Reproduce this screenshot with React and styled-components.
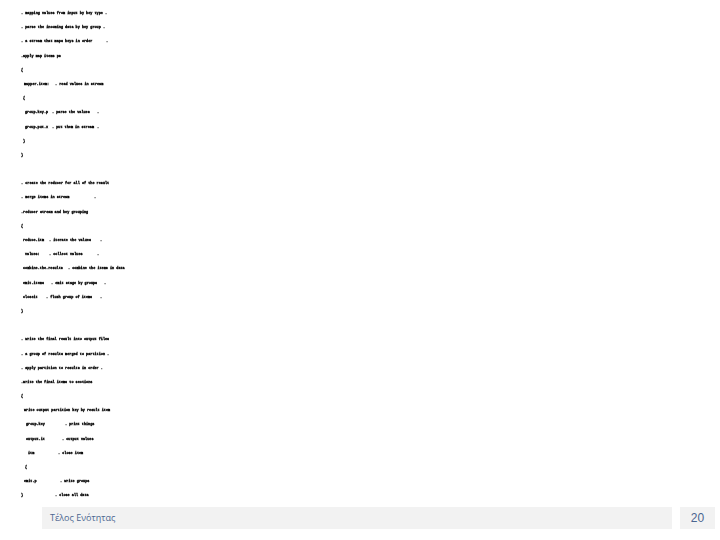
import React from "react";
import styled, { createGlobalStyle } from "styled-components";

const GlobalStyle = createGlobalStyle`
  html, body {
    margin: 0;
    padding: 0;
    background: #fff;
  }
`;

const Slide = styled.div`
  display: flex;
  flex-direction: column;
  width: 720px;
  height: 540px;
  overflow: hidden;
  background: #fff;
`;

const Code = styled.div`
  display: flex;
  flex-direction: column;
  padding: 6px 0 0 21px;
  font-family: "Liberation Mono", "Courier New", monospace;
  font-size: 3.5px;
  font-weight: 700;
  color: #000;
  -webkit-text-stroke: 0.3px #000;
  will-change: transform;
`;

const Line = styled.div`
  display: flex;
  height: 14.2px;
  line-height: 14.2px;
  padding-left: ${(p) => p.$indent || 0}px;
  white-space: nowrap;
`;

const Token = styled.span`
  flex: none;
  min-width: ${(p) => p.$w || 0}px;
`;

const Footer = styled.div`
  display: flex;
  gap: 8px;
  height: 22px;
  margin-top: auto;
  margin-bottom: 11px;
  padding: 0 5px 0 42px;
`;

const FooterBar = styled.div`
  flex: 1;
  padding-left: 8px;
  background: #f2f2f2;
  color: #4a6590;
  font-family: "Open Sans", "Noto Sans", sans-serif;
  font-size: 9px;
  line-height: 22px;
`;

const PageNumber = styled.div`
  width: 35px;
  background: #f2f2f2;
  color: #4a6590;
  font-family: "Liberation Sans", Arial, sans-serif;
  font-size: 12px;
  line-height: 22px;
  text-align: center;
`;

// each row: indent, then [text, width] pairs
const rows = [
  [0, [". mapping values from input by key type ."]],
  [0, [". parse the incoming data by key group ."]],
  [0, [". a stream that maps keys in order", 85], ["."]],
  [-1, [".apply map items ps"]],
  [0, ["{"]],
  [3, ["mapper.item:", 31], [". read values in stream"]],
  [2, ["{"]],
  [4, ["group.key.p", 27], [". parse the values", 45], ["."]],
  [4, ["group.put.x", 27], [". put them in stream", 45], ["."]],
  [2, ["}"]],
  [0, ["}"]],
  [0, [" "]],
  [0, [". create the reducer for all of the result"]],
  [0, [". merge items in stream", 73], ["."]],
  [-1, [".reducer stream and key grouping"]],
  [0, ["{"]],
  [2, ["reduce.itm", 26], [". iterate the values", 51], ["."]],
  [4, ["values:", 24], [". collect values", 48], ["."]],
  [2, ["combine.the.results", 45], [". combine the items in data"]],
  [2, ["emit.items", 28], [". emit stage by groups", 53], ["."]],
  [2, ["closeit", 23], [". flush group of items", 54], ["."]],
  [0, ["}"]],
  [0, [" "]],
  [0, [". write the final result into output files"]],
  [0, [". a group of results merged to partition ."]],
  [0, [". apply partition to results in order  ."]],
  [-1, [".write the final items to sections"]],
  [0, ["{"]],
  [3, ["write output partition key by result item"]],
  [5, ["group.key", 39], [". print things"]],
  [5, ["output.it", 36], [". output values"]],
  [7, ["itm", 30], [". close item"]],
  [4, ["{"]],
  [3, ["emit.p", 36], [". write groups"]],
  [0, ["}", 34], [". close all data"]],
];

const App = () => {
  return (
    <Slide>
      <GlobalStyle />
      <Code>
        {rows.map(([indent, ...tokens], i) => (
          <Line key={i} $indent={indent}>
            {tokens.map(([text, w], j) => (
              <Token key={j} $w={w}>
                {text}
              </Token>
            ))}
          </Line>
        ))}
      </Code>
      <Footer>
        <FooterBar>Τέλος Ενότητας</FooterBar>
        <PageNumber>20</PageNumber>
      </Footer>
    </Slide>
  );
};

export default App;
